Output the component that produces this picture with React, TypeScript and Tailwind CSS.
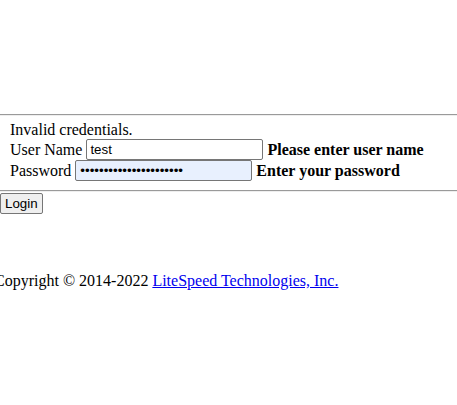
export default function App() {
    return (
        <div className="min-h-[405px] bg-white text-black text-[16px] leading-[18px] font-['Liberation_Serif',serif] overflow-hidden">
            <div className="h-[114px]" />
            <hr className="h-0 border-0 border-t border-b border-t-[#9a9a9a] border-b-[#eeeeee]" />

            {/* Login form */}
            <div className="pl-[10px] pt-[5px] pb-[9px]">
                <div className="h-[18px]">Invalid credentials.</div>
                <div className="flex items-center h-[21px] whitespace-pre">
                    <span>User Name </span>
                    <input
                        type="text"
                        defaultValue="test"
                        className="w-[177px] h-[21px] border border-[#767676] rounded-[2px] px-[3px] bg-white text-[13.33px] font-['Liberation_Sans',sans-serif] outline-none"
                    />
                    <b> Please enter user name</b>
                </div>
                <div className="flex items-center h-[21px] whitespace-pre">
                    <span>Password </span>
                    <input
                        type="password"
                        defaultValue="abcdefghijklmnopqrstuv"
                        className="w-[177px] h-[21px] border border-[#767676] rounded-[2px] px-[4px] bg-[#e8f0fe] text-[13.33px] font-['Liberation_Sans',sans-serif] outline-none"
                    />
                    <b> Enter your password</b>
                </div>
            </div>

            <hr className="h-0 border-0 border-t border-b border-t-[#9a9a9a] border-b-[#eeeeee]" />

            <button className="mt-[1px] h-[21px] px-[4px] bg-[#efefef] border border-[#767676] rounded-[2px] text-[13.33px] leading-none font-['Liberation_Sans',sans-serif]">
                Login
            </button>

            <div className="mt-[58px] -ml-[6px] whitespace-pre">
                Copyright © 2014-2022{' '}
                <a href="#" className="text-[#0000ee] underline">
                    LiteSpeed Technologies, Inc.
                </a>
            </div>
        </div>
    );
}
